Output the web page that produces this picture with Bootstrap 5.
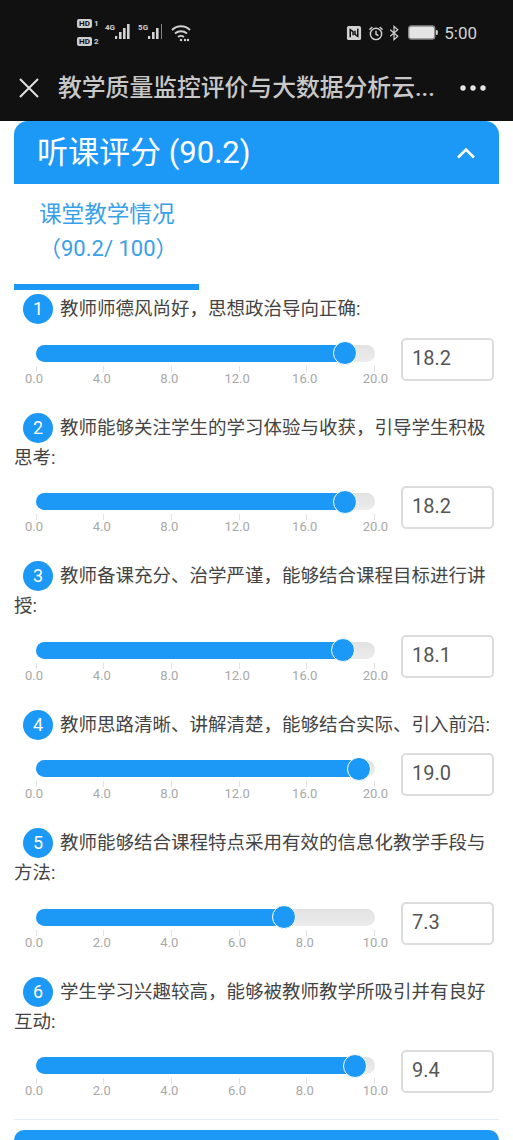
<!DOCTYPE html>
<html lang="zh-CN">
<head>
<meta charset="utf-8">
<title>听课评分</title>
<link href="https://cdn.jsdelivr.net/npm/bootstrap@5.3.0/dist/css/bootstrap.min.css" rel="stylesheet">
<style>
html,body{height:1140px;overflow:hidden}
body{font-family:Roboto,"Noto Sans CJK SC",sans-serif;background:#fff;color:#444}
.app-top{background:#111;color:#d2d2d2;height:121px}
.status-row{height:66px;padding:19px 36px 0 77px}
.hd-col{width:28px;gap:9px}
.hd-item{height:9px;font-size:8px;line-height:9px;font-weight:700}
.hd-box{display:inline-block;width:15px;height:9px;border-radius:2px;background:#cfcfcf;color:#111;text-align:center;margin-right:2px}
.net-tag{font-size:8px;font-weight:700;line-height:8px;margin-top:5px}
.bar-ico{margin-top:4px}
.wifi-ico{margin-top:5px;margin-left:6px}
.right-ico{margin-top:6px}
.ico-alarm{margin-left:6px}
.ico-blue{margin-left:4px}
.ico-batt{margin-left:8px}
.clock-txt{font-size:17px;line-height:28px;margin-left:6px}
.title-row{height:44px;padding:0 27px 0 18px}
.title-txt{font-size:23.800px;line-height:34px;color:#c8c8c8;margin-left:18px;white-space:nowrap;width:380px;font-weight:500}
.score-wrap{padding:0 14px}
.score-card{border:0;border-radius:14px 14px 0 0;background:transparent}
.score-head{background:#1c98f7;color:#fff;height:63px;border:0;border-radius:14px 14px 0 0!important;padding:0 23px;font-size:31px;line-height:63px}
.tab-box{padding:14px 25px 20px;font-size:22.600px;line-height:33px;color:#39a0ea}
.tab-box span{display:block}
.tab-box .tab-score{font-size:22px;margin-top:1px;margin-bottom:-1px}
.tab-line{width:185px;height:6px;background:#1c98f7}
.quest-list{padding:4px 0 0}
.quest-item{margin-bottom:31px}
.quest-item:last-child{margin-bottom:0}
.quest-txt{font-size:18.500px;line-height:30px;color:#444;margin:0 0 14.500px;padding-left:9px}
.quest-txt.wrapped{padding-left:0}
.quest-num{display:inline-block;width:30px;height:30px;border-radius:50%;background:#1c98f7;color:#fff;text-align:center;font-size:18px;line-height:30px;margin-right:7px;vertical-align:top}
.quest-txt.wrapped .quest-num{margin-left:9px}
.range-row{height:43px;padding-left:22px;padding-right:5px}
.range-col{width:339.500px;padding-top:6px}
.range-bar{height:17px;border-radius:9px;background:linear-gradient(#e2e2e2,#ececec);position:relative}
.range-fill{height:17px;border-radius:9px;background:#1c98f7}
.range-thumb{position:absolute;top:-3.500px;width:24px;height:24px;margin-left:-11px;border-radius:50%;background:#1c98f7;border:1.500px solid #fff}
.range-scale{margin-top:4px}
.range-scale>div{width:0;display:flex;flex-direction:column;align-items:center;font-size:13px;line-height:15px;color:#a8a8a8;white-space:nowrap}
.range-scale i{display:block;width:1px;height:6px;background:#e2e2e2;margin-bottom:-1px}
.range-scale b{font-weight:400;margin-left:-4px}
.range-scale>div:last-child b{margin-left:2px}
.score-input{width:93px;height:43px;margin-left:26.500px;margin-top:-1px;border:2px solid #dcdcdc;border-radius:5px;padding:0 9px 3px;font-size:20px;color:#555;box-shadow:none;background:#fff}
.end-line{border:0;border-top:1px solid #e6eef3;opacity:1;margin:25px 0 10px}
.next-head{height:10px;background:#1c98f7;border-radius:14px 14px 0 0}
</style>
</head>
<body>
<div class="app-top">
  <div class="status-row d-flex justify-content-between align-items-start">
    <div class="d-flex">
      <div class="hd-col d-flex flex-column">
        <div class="hd-item"><span class="hd-box">HD</span>1</div>
        <div class="hd-item"><span class="hd-box">HD</span>2</div>
      </div>
      <div class="net-tag">4G</div>
      <svg width="19" height="18" viewBox="0 0 19 18" class="bar-ico" fill="#d2d2d2"><rect x="0" y="13" width="2.200" height="3"/><rect x="4" y="9" width="2.600" height="7"/><rect x="8" y="5" width="2.600" height="11"/><rect x="12" y="1" width="2.600" height="15"/></svg>
      <div class="net-tag ms-1">5G</div>
      <svg width="17" height="18" viewBox="0 0 17 18" class="bar-ico" fill="#d2d2d2"><rect x="0" y="13" width="2.200" height="3"/><rect x="4" y="9" width="2.600" height="7"/><rect x="8" y="5" width="2.600" height="11"/><rect x="13" y="1" width="1" height="15" opacity=".6"/></svg>
      <svg width="20" height="18" viewBox="0 0 20 18" class="wifi-ico" fill="none" stroke="#d2d2d2" stroke-width="1.800"><path d="M1 6c5-5 13-5 18 0"/><path d="M4 9.500c3.500-3 8.500-3 12 0"/><path d="M7 13c2-1.500 4-1.500 6 0"/><circle cx="10" cy="16" r="1.200" fill="#d2d2d2" stroke="none"/><circle cx="14" cy="16" r="1.200" fill="#d2d2d2" stroke="none"/><circle cx="17" cy="16" r="1.200" fill="#d2d2d2" stroke="none"/></svg>
    </div>
    <div class="d-flex align-items-start">
      <svg width="16" height="16" viewBox="0 0 17 17" class="right-ico"><rect x="1" y="1" width="15" height="15" rx="2" fill="#d2d2d2"/><path d="M4.500 13V5l3 2v4M12.500 4v8l-3-2V6" fill="none" stroke="#111" stroke-width="1.600"/></svg>
      <svg width="16" height="16" viewBox="0 0 17 17" class="right-ico ico-alarm" fill="none" stroke="#d2d2d2" stroke-width="1.500"><circle cx="8.500" cy="9.500" r="6"/><path d="M8.500 6v3.800l2.600 1.500M1.500 5 4.500 2M15.500 5l-3-3"/></svg>
      <svg width="12" height="16" viewBox="0 0 12 17" class="right-ico ico-blue" fill="none" stroke="#d2d2d2" stroke-width="1.300"><path d="M2 5l8 7-4 3.500V1.500L10 5 2 12"/></svg>
      <svg width="30" height="15" viewBox="0 0 30 15" class="right-ico ico-batt"><rect x=".7" y="1" width="26" height="13" rx="2.500" fill="#e4e4e4" stroke="#8a8a8a" stroke-width="1.400"/><rect x="27.800" y="5" width="2" height="5" rx="1" fill="#d2d2d2"/></svg>
      <span class="clock-txt">5:00</span>
    </div>
  </div>
  <div class="title-row d-flex align-items-center">
    <svg width="22" height="22" viewBox="0 0 22 22" fill="none" stroke="#e0e0e0" stroke-width="2"><path d="M2 2l18 18M20 2 2 20"/></svg>
    <div class="title-txt">教学质量监控评价与大数据分析云...</div>
    <div class="d-flex gap-2 ms-auto" aria-label="更多">
      <svg width="26" height="6" viewBox="0 0 26 6" fill="#e4e4e4"><circle cx="3" cy="3" r="2.700"/><circle cx="13" cy="3" r="2.700"/><circle cx="23" cy="3" r="2.700"/></svg>
    </div>
  </div>
</div>
<div class="score-wrap">
  <div class="card score-card">
    <div class="card-header score-head d-flex justify-content-between align-items-center">
      <span>听课评分 (90.2)</span>
      <svg width="20" height="12" viewBox="0 0 20 12" fill="none" stroke="#fff" stroke-width="2.600"><path d="M2 10.500l8-8 8 8"/></svg>
    </div>
    <div class="tab-box"><span>课堂教学情况</span><span class="tab-score">（90.2/ 100）</span></div>
    <div class="tab-line"></div>
    <div class="quest-list">

      <div class="quest-item">
        <p class="quest-txt"><span class="quest-num">1</span>教师师德风尚好，思想政治导向正确:</p>
        <div class="range-row d-flex align-items-start">
          <div class="range-col">
            <div class="range-bar"><div class="range-fill" style="width:91%"></div><div class="range-thumb" style="left:91%"></div></div>
            <div class="range-scale d-flex justify-content-between"><div><i></i><b>0.0</b></div><div><i></i><b>4.0</b></div><div><i></i><b>8.0</b></div><div><i></i><b>12.0</b></div><div><i></i><b>16.0</b></div><div><i></i><b>20.0</b></div></div>
          </div>
          <input class="form-control score-input" type="text" readonly value="18.2">
        </div>
      </div>

      <div class="quest-item">
        <p class="quest-txt wrapped"><span class="quest-num">2</span>教师能够关注学生的学习体验与收获，引导学生积极思考:</p>
        <div class="range-row d-flex align-items-start">
          <div class="range-col">
            <div class="range-bar"><div class="range-fill" style="width:91%"></div><div class="range-thumb" style="left:91%"></div></div>
            <div class="range-scale d-flex justify-content-between"><div><i></i><b>0.0</b></div><div><i></i><b>4.0</b></div><div><i></i><b>8.0</b></div><div><i></i><b>12.0</b></div><div><i></i><b>16.0</b></div><div><i></i><b>20.0</b></div></div>
          </div>
          <input class="form-control score-input" type="text" readonly value="18.2">
        </div>
      </div>

      <div class="quest-item">
        <p class="quest-txt wrapped"><span class="quest-num">3</span>教师备课充分、治学严谨，能够结合课程目标进行讲授:</p>
        <div class="range-row d-flex align-items-start">
          <div class="range-col">
            <div class="range-bar"><div class="range-fill" style="width:90.5%"></div><div class="range-thumb" style="left:90.5%"></div></div>
            <div class="range-scale d-flex justify-content-between"><div><i></i><b>0.0</b></div><div><i></i><b>4.0</b></div><div><i></i><b>8.0</b></div><div><i></i><b>12.0</b></div><div><i></i><b>16.0</b></div><div><i></i><b>20.0</b></div></div>
          </div>
          <input class="form-control score-input" type="text" readonly value="18.1">
        </div>
      </div>

      <div class="quest-item">
        <p class="quest-txt"><span class="quest-num">4</span>教师思路清晰、讲解清楚，能够结合实际、引入前沿:</p>
        <div class="range-row d-flex align-items-start">
          <div class="range-col">
            <div class="range-bar"><div class="range-fill" style="width:95%"></div><div class="range-thumb" style="left:95%"></div></div>
            <div class="range-scale d-flex justify-content-between"><div><i></i><b>0.0</b></div><div><i></i><b>4.0</b></div><div><i></i><b>8.0</b></div><div><i></i><b>12.0</b></div><div><i></i><b>16.0</b></div><div><i></i><b>20.0</b></div></div>
          </div>
          <input class="form-control score-input" type="text" readonly value="19.0">
        </div>
      </div>

      <div class="quest-item">
        <p class="quest-txt wrapped"><span class="quest-num">5</span>教师能够结合课程特点采用有效的信息化教学手段与方法:</p>
        <div class="range-row d-flex align-items-start">
          <div class="range-col">
            <div class="range-bar"><div class="range-fill" style="width:73%"></div><div class="range-thumb" style="left:73%"></div></div>
            <div class="range-scale d-flex justify-content-between"><div><i></i><b>0.0</b></div><div><i></i><b>2.0</b></div><div><i></i><b>4.0</b></div><div><i></i><b>6.0</b></div><div><i></i><b>8.0</b></div><div><i></i><b>10.0</b></div></div>
          </div>
          <input class="form-control score-input" type="text" readonly value="7.3">
        </div>
      </div>

      <div class="quest-item">
        <p class="quest-txt wrapped"><span class="quest-num">6</span>学生学习兴趣较高，能够被教师教学所吸引并有良好互动:</p>
        <div class="range-row d-flex align-items-start">
          <div class="range-col">
            <div class="range-bar"><div class="range-fill" style="width:94%"></div><div class="range-thumb" style="left:94%"></div></div>
            <div class="range-scale d-flex justify-content-between"><div><i></i><b>0.0</b></div><div><i></i><b>2.0</b></div><div><i></i><b>4.0</b></div><div><i></i><b>6.0</b></div><div><i></i><b>8.0</b></div><div><i></i><b>10.0</b></div></div>
          </div>
          <input class="form-control score-input" type="text" readonly value="9.4">
        </div>
      </div>

    </div>
    <hr class="end-line">
    <div class="next-head"></div>
  </div>
</div>
<script src="https://cdn.jsdelivr.net/npm/bootstrap@5.3.0/dist/js/bootstrap.bundle.min.js"></script>
</body>
</html>
